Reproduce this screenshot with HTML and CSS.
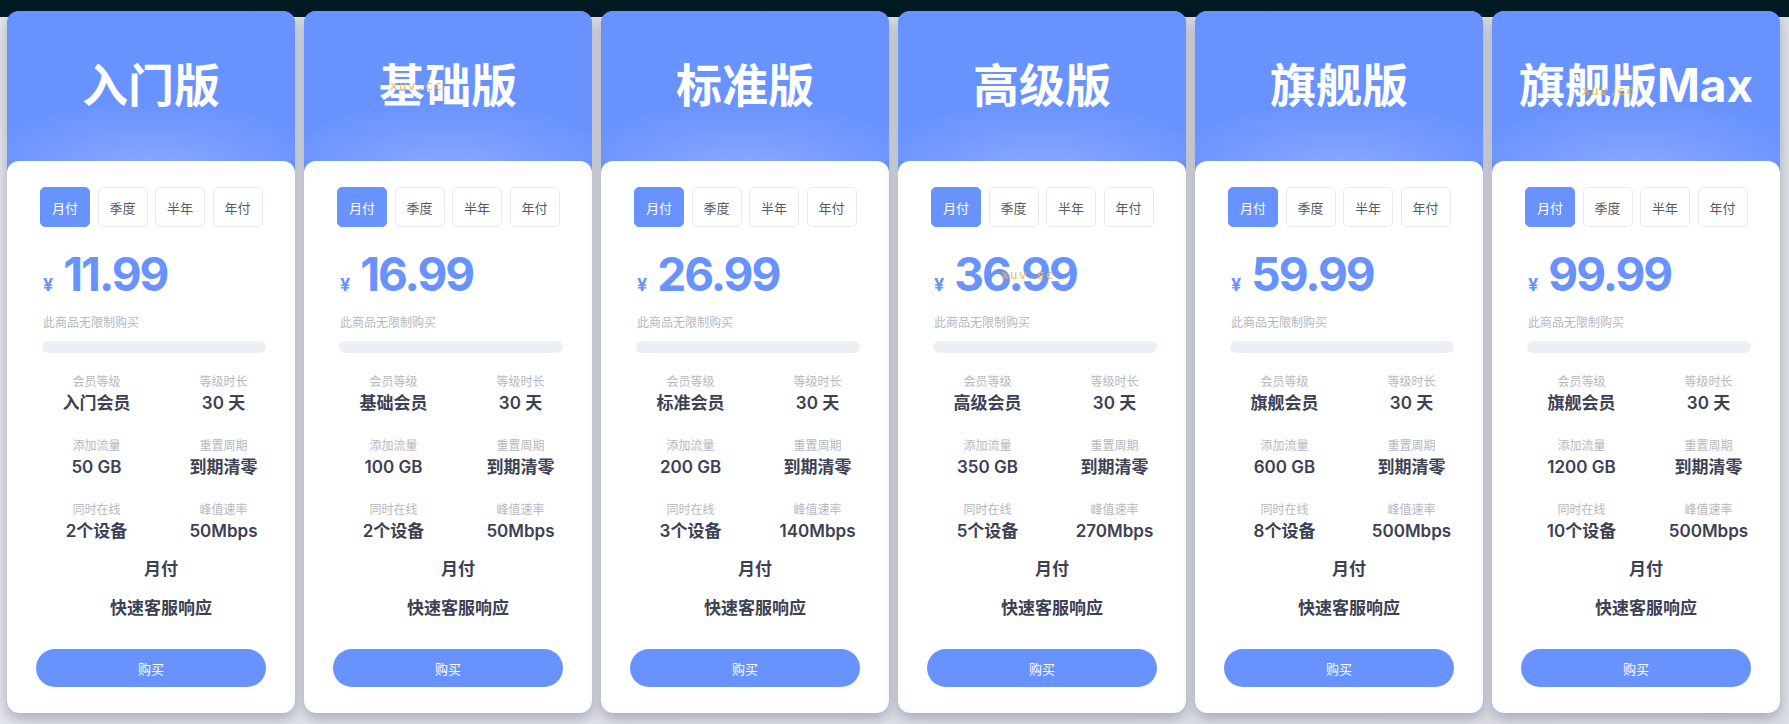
FILE: index.html
```html
<!DOCTYPE html>
<html lang="zh-CN">
<head>
<meta charset="utf-8">
<title>套餐</title>
<link rel="stylesheet" href="styles.css">
</head>
<body>
<div class="page">

  <div class="card">
    <div class="head"><h2 class="title">入门版</h2></div>
    <div class="body">
      <div class="tabs"><span class="tab active">月付</span><span class="tab">季度</span><span class="tab">半年</span><span class="tab">年付</span></div>
      <div class="price"><span class="cur">¥</span><span class="num">11.99</span></div>
      <div class="note">此商品无限制购买</div>
      <div class="bar"></div>
      <div class="specs">
        <div class="spec"><div class="lbl">会员等级</div><div class="val">入门会员</div></div>
        <div class="spec"><div class="lbl">等级时长</div><div class="val">30 天</div></div>
        <div class="spec"><div class="lbl">添加流量</div><div class="val">50 GB</div></div>
        <div class="spec"><div class="lbl">重置周期</div><div class="val">到期清零</div></div>
        <div class="spec"><div class="lbl">同时在线</div><div class="val">2个设备</div></div>
        <div class="spec"><div class="lbl">峰值速率</div><div class="val">50Mbps</div></div>
      </div>
      <ul class="feats"><li>月付</li><li>快速客服响应</li></ul>
      <button class="buy">购买</button>
    </div>
  </div>

  <div class="card">
    <div class="head"><h2 class="title">基础版</h2><span class="wm wm-a">xuv.cc</span></div>
    <div class="body">
      <div class="tabs"><span class="tab active">月付</span><span class="tab">季度</span><span class="tab">半年</span><span class="tab">年付</span></div>
      <div class="price"><span class="cur">¥</span><span class="num">16.99</span></div>
      <div class="note">此商品无限制购买</div>
      <div class="bar"></div>
      <div class="specs">
        <div class="spec"><div class="lbl">会员等级</div><div class="val">基础会员</div></div>
        <div class="spec"><div class="lbl">等级时长</div><div class="val">30 天</div></div>
        <div class="spec"><div class="lbl">添加流量</div><div class="val">100 GB</div></div>
        <div class="spec"><div class="lbl">重置周期</div><div class="val">到期清零</div></div>
        <div class="spec"><div class="lbl">同时在线</div><div class="val">2个设备</div></div>
        <div class="spec"><div class="lbl">峰值速率</div><div class="val">50Mbps</div></div>
      </div>
      <ul class="feats"><li>月付</li><li>快速客服响应</li></ul>
      <button class="buy">购买</button>
    </div>
  </div>

  <div class="card">
    <div class="head"><h2 class="title">标准版</h2></div>
    <div class="body">
      <div class="tabs"><span class="tab active">月付</span><span class="tab">季度</span><span class="tab">半年</span><span class="tab">年付</span></div>
      <div class="price"><span class="cur">¥</span><span class="num">26.99</span></div>
      <div class="note">此商品无限制购买</div>
      <div class="bar"></div>
      <div class="specs">
        <div class="spec"><div class="lbl">会员等级</div><div class="val">标准会员</div></div>
        <div class="spec"><div class="lbl">等级时长</div><div class="val">30 天</div></div>
        <div class="spec"><div class="lbl">添加流量</div><div class="val">200 GB</div></div>
        <div class="spec"><div class="lbl">重置周期</div><div class="val">到期清零</div></div>
        <div class="spec"><div class="lbl">同时在线</div><div class="val">3个设备</div></div>
        <div class="spec"><div class="lbl">峰值速率</div><div class="val">140Mbps</div></div>
      </div>
      <ul class="feats"><li>月付</li><li>快速客服响应</li></ul>
      <button class="buy">购买</button>
    </div>
  </div>

  <div class="card">
    <div class="head"><h2 class="title">高级版</h2></div>
    <div class="body">
      <div class="tabs"><span class="tab active">月付</span><span class="tab">季度</span><span class="tab">半年</span><span class="tab">年付</span></div>
      <div class="price"><span class="cur">¥</span><span class="num">36.99</span><span class="wm wm-b">xuv.cc</span></div>
      <div class="note">此商品无限制购买</div>
      <div class="bar"></div>
      <div class="specs">
        <div class="spec"><div class="lbl">会员等级</div><div class="val">高级会员</div></div>
        <div class="spec"><div class="lbl">等级时长</div><div class="val">30 天</div></div>
        <div class="spec"><div class="lbl">添加流量</div><div class="val">350 GB</div></div>
        <div class="spec"><div class="lbl">重置周期</div><div class="val">到期清零</div></div>
        <div class="spec"><div class="lbl">同时在线</div><div class="val">5个设备</div></div>
        <div class="spec"><div class="lbl">峰值速率</div><div class="val">270Mbps</div></div>
      </div>
      <ul class="feats"><li>月付</li><li>快速客服响应</li></ul>
      <button class="buy">购买</button>
    </div>
  </div>

  <div class="card">
    <div class="head"><h2 class="title">旗舰版</h2></div>
    <div class="body">
      <div class="tabs"><span class="tab active">月付</span><span class="tab">季度</span><span class="tab">半年</span><span class="tab">年付</span></div>
      <div class="price"><span class="cur">¥</span><span class="num">59.99</span></div>
      <div class="note">此商品无限制购买</div>
      <div class="bar"></div>
      <div class="specs">
        <div class="spec"><div class="lbl">会员等级</div><div class="val">旗舰会员</div></div>
        <div class="spec"><div class="lbl">等级时长</div><div class="val">30 天</div></div>
        <div class="spec"><div class="lbl">添加流量</div><div class="val">600 GB</div></div>
        <div class="spec"><div class="lbl">重置周期</div><div class="val">到期清零</div></div>
        <div class="spec"><div class="lbl">同时在线</div><div class="val">8个设备</div></div>
        <div class="spec"><div class="lbl">峰值速率</div><div class="val">500Mbps</div></div>
      </div>
      <ul class="feats"><li>月付</li><li>快速客服响应</li></ul>
      <button class="buy">购买</button>
    </div>
  </div>

  <div class="card">
    <div class="head"><h2 class="title">旗舰版Max</h2><span class="wm wm-c">xuv.cc</span></div>
    <div class="body">
      <div class="tabs"><span class="tab active">月付</span><span class="tab">季度</span><span class="tab">半年</span><span class="tab">年付</span></div>
      <div class="price"><span class="cur">¥</span><span class="num">99.99</span></div>
      <div class="note">此商品无限制购买</div>
      <div class="bar"></div>
      <div class="specs">
        <div class="spec"><div class="lbl">会员等级</div><div class="val">旗舰会员</div></div>
        <div class="spec"><div class="lbl">等级时长</div><div class="val">30 天</div></div>
        <div class="spec"><div class="lbl">添加流量</div><div class="val">1200 GB</div></div>
        <div class="spec"><div class="lbl">重置周期</div><div class="val">到期清零</div></div>
        <div class="spec"><div class="lbl">同时在线</div><div class="val">10个设备</div></div>
        <div class="spec"><div class="lbl">峰值速率</div><div class="val">500Mbps</div></div>
      </div>
      <ul class="feats"><li>月付</li><li>快速客服响应</li></ul>
      <button class="buy">购买</button>
    </div>
  </div>

</div>
</body>
</html>
```

FILE: styles.css
```css
* { box-sizing: border-box; }

html, body {
  margin: 0;
  padding: 0;
}

body {
  width: 1789px;
  height: 724px;
  overflow: hidden;
  font-family: "Inter", "Noto Sans CJK SC", sans-serif;
  background:
    linear-gradient(#021a22 0, #031a24 17px, transparent 17px),
    linear-gradient(90deg, #e4e6ed, #dfe1e8);
}

.page {
  display: flex;
  gap: 9px;
  padding: 11px 0 0 7px;
}

.card {
  width: 288px;
  flex: 0 0 288px;
  border-radius: 12px;
  overflow: hidden;
  background: #6893ff;
  box-shadow: 0 6px 14px rgba(40, 46, 72, 0.32);
}

.head {
  position: relative;
  height: 150px;
  display: flex;
  align-items: center;
  justify-content: center;
  padding-bottom: 2px;
  background: radial-gradient(ellipse 62% 48% at 50% 108%, #8eabff 0%, #7c9eff 45%, #6893ff 100%);
}

.title {
  margin: 0;
  color: #ffffff;
  font-family: "Inter", "Noto Sans CJK SC", sans-serif;
  font-size: 46px;
  font-weight: 700;
  line-height: 1;
  letter-spacing: 0;
}

.wm {
  position: absolute;
  color: #f5b52e;
  font-family: "DejaVu Sans Mono", monospace;
  font-size: 13px;
  line-height: 16px;
  letter-spacing: 1px;
  opacity: 0.9;
  pointer-events: none;
}
.wm-a { left: 86px; top: 67px; }
.wm-c { left: 90px; top: 72px; }
.wm-b { left: 74px; top: 16px; }

.body {
  background: #ffffff;
  border-radius: 12px 12px 0 0;
  padding: 26px 29px 26px 29px;
}

.tabs {
  display: flex;
  justify-content: flex-start;
  gap: 7.5px;
  margin-left: 4px;
}

.tab {
  width: 50px;
  height: 40px;
  display: flex;
  align-items: center;
  justify-content: center;
  border: 1px solid #e8eaef;
  border-radius: 5px;
  font-family: "Noto Sans CJK SC", sans-serif;
  font-size: 13px;
  color: #555a66;
}
.tab.active {
  background: #6893ff;
  border-color: #6893ff;
  color: #ffffff;
}

.price {
  position: relative;
  display: flex;
  align-items: baseline;
  margin-top: 24px;
  padding-left: 7px;
  color: #6893ff;
  line-height: 46px;
  height: 46px;
}
.cur {
  font-size: 18px;
  font-weight: 700;
  margin-right: 10px;
}
.num {
  font-size: 46px;
  font-weight: 700;
  letter-spacing: -2px;
}

.note {
  margin-top: 17px;
  padding-left: 7px;
  font-family: "Noto Sans CJK SC", sans-serif;
  font-size: 12px;
  line-height: 16px;
  color: #b6b7c0;
}

.bar {
  margin: 11px 0 0 6px;
  width: 224px;
  height: 12px;
  border-radius: 6px;
  background: #eceff3;
}

.specs {
  display: grid;
  grid-template-columns: 127px 127px;
  row-gap: 22px;
  margin: 20px -24px 0 -3px;
  text-align: center;
}

.lbl {
  font-family: "Noto Sans CJK SC", sans-serif;
  font-size: 12px;
  line-height: 16px;
  color: #b6b7c0;
}
.val {
  margin-top: 2px;
  font-size: 17px;
  font-weight: 600;
  line-height: 24px;
  color: #3d4154;
}

.feats {
  list-style: none;
  margin: 13px 0 0 0;
  padding: 0 0 0 20px;
  text-align: center;
}
.feats li {
  font-size: 17px;
  font-weight: 600;
  line-height: 26px;
  color: #3d4154;
  margin-bottom: 13px;
}
.feats li:last-child { margin-bottom: 0; }

.buy {
  display: block;
  width: 230px;
  height: 38px;
  margin: 28px 0 0 0;
  border: 0;
  border-radius: 19px;
  background: #6893ff;
  color: #ffffff;
  font-family: "Noto Sans CJK SC", sans-serif;
  font-size: 13px;
}
```
